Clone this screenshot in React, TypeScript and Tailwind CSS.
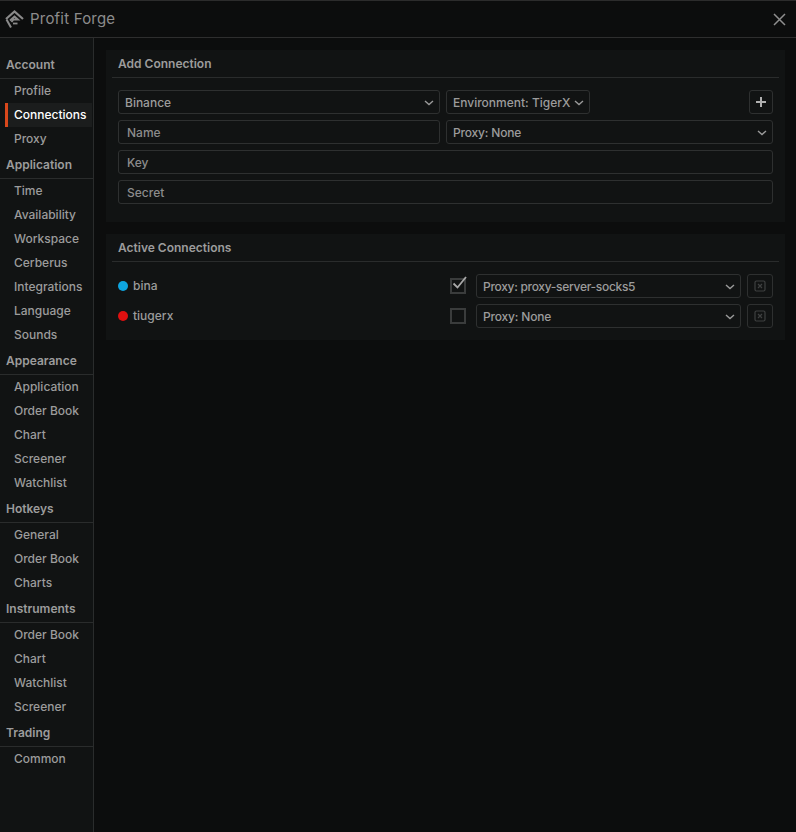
import React from "react";

const groups: [string, string[]][] = [
  ["Account", ["Profile", "Connections", "Proxy"]],
  ["Application", ["Time", "Availability", "Workspace", "Cerberus", "Integrations", "Language", "Sounds"]],
  ["Appearance", ["Application", "Order Book", "Chart", "Screener", "Watchlist"]],
  ["Hotkeys", ["General", "Order Book", "Charts"]],
  ["Instruments", ["Order Book", "Chart", "Watchlist", "Screener"]],
  ["Trading", ["Common"]],
];

const Chevron = () => (
  <svg width="10" height="6" viewBox="0 0 10 6" fill="none" className="shrink-0">
    <path d="M1 1l4 3.5L9 1" stroke="#9a9a9a" strokeWidth="1.4" />
  </svg>
);

function Select({ label, className }: { label: string; className: string }) {
  return (
    <div className={`h-6 flex items-center justify-between pl-[6px] pr-[5px] pt-px border border-[#2e3030] rounded-[3px] text-[#9c9c9c] ${className}`}>
      <span className="whitespace-nowrap">{label}</span>
      <Chevron />
    </div>
  );
}

function Field({ label, className }: { label: string; className: string }) {
  return (
    <div className={`h-6 flex items-center pl-2 pt-px border border-[#2e3030] rounded-[3px] text-[#8c8c8c] ${className}`}>{label}</div>
  );
}

function Panel({ title, className, children }: { title: string; className: string; children: React.ReactNode }) {
  return (
    <section className={`bg-[#111313] px-[6px] ${className}`}>
      <div className="h-[28px] flex items-center pl-[6px] pt-px border-b border-[#2a2c2c] text-[#9c9c9c] font-semibold">{title}</div>
      {children}
    </section>
  );
}

function ConnRow({ name, color, proxy, checked, track }: { name: string; color: string; proxy: string; checked: boolean; track: string }) {
  return (
    <div className="h-6 flex items-center pl-[6px] pr-[6px]">
      <span className="w-[10px] h-[10px] shrink-0 rounded-full" style={{ backgroundColor: color }} />
      <span className="ml-[5px] w-[317px] shrink-0 text-[#9c9c9c]">{name}</span>
      <div className="relative w-4 h-4 shrink-0 border-2 border-[#3a3c3c] mr-[10px]">
        {checked && (
          <svg width="17" height="15" viewBox="0 0 17 15" fill="none" className="absolute left-[-1px] top-[-5px]">
            <path d="M2.5 8.5l4 4L15 2" stroke="#a8a8a8" strokeWidth="1.8" />
          </svg>
        )}
      </div>
      <Select label={proxy} className={`w-[265px] shrink-0 mr-[6px] ${track}`} />
      <div className="w-[26px] h-6 shrink-0 flex items-center justify-center border border-[#2e3030] rounded-[3px]">
        <svg width="12" height="12" viewBox="0 0 12 12" fill="none">
          <rect x="1" y="1" width="10" height="10" rx="1.5" stroke="#3f4141" strokeWidth="1.2" />
          <path d="M4 4l4 4M8 4l-4 4" stroke="#3f4141" strokeWidth="1.2" />
        </svg>
      </div>
    </div>
  );
}

export default function App() {
  return (
    <div className="w-[796px] h-[832px] flex flex-col bg-[#0c0d0d] text-[12px] font-medium overflow-hidden font-['Inter',sans-serif]">
      <header className="h-[38px] shrink-0 flex items-center justify-between pl-[5px] pr-[10px] border-t border-b border-t-[#2c2c2c] border-b-[#2e2e2e]">
        <div className="flex items-center gap-[6px]">
          <svg width="19" height="19" viewBox="0 0 19 19" fill="none">
            <path d="M1 9L9.5 1.5L18 9" stroke="#8a8a8a" strokeWidth="2.2" />
            <path d="M1.5 9.5L6 17.5" stroke="#8a8a8a" strokeWidth="2" />
            <path d="M5 10.5L9.5 6.5L13 9.5H8.5L6.5 12" stroke="#8a8a8a" strokeWidth="1.8" />
            <path d="M8 13.5H12.5" stroke="#8a8a8a" strokeWidth="1.8" />
          </svg>
          <span className="text-[15px] font-normal tracking-[0.2px] text-[#8c8c8c]">Profit Forge</span>
        </div>
        <svg width="13" height="13" viewBox="0 0 13 13" fill="none">
          <path d="M1 1l11 11M12 1L1 12" stroke="#8f8f8f" strokeWidth="1.5" />
        </svg>
      </header>
      <div className="flex-1 flex min-h-0">
        <nav className="w-[94px] shrink-0 bg-[#111313] border-r border-[#2a2c2c] pt-[13px]">
          {groups.map(([head, items]) => (
            <div key={head}>
              <div className="h-[28px] flex items-center pl-[6px] pt-px border-b border-[#2a2c2c] text-[#9c9c9c] font-semibold">{head}</div>
              {items.map((it) => {
                const active = it === "Connections";
                return (
                  <div
                    key={it}
                    className={active
                      ? "h-6 ml-[5px] mr-px pl-[6px] flex items-center border-l-[3px] border-[#d9481c] bg-[#1b1d1d] text-white"
                      : "h-6 pl-[14px] flex items-center text-[#9c9c9c]"}
                  >
                    {it}
                  </div>
                );
              })}
            </div>
          ))}
        </nav>
        <main className="flex-1 pl-3 pr-[11px] pt-3 flex flex-col gap-3">
          <Panel title="Add Connection" className="h-[172px]">
            <div className="mt-3 px-[6px] flex flex-col gap-[6px]">
              <div className="flex gap-[6px]">
                <Select label="Binance" className="w-[322px]" />
                <Select label="Environment: TigerX" className="w-[144px]" />
                <div className="ml-auto w-6 h-6 flex items-center justify-center border border-[#2e3030] rounded-[3px]">
                  <svg width="12" height="12" viewBox="0 0 12 12" fill="none">
                    <path d="M6 1v10M1 6h10" stroke="#b0b0b0" strokeWidth="2" />
                  </svg>
                </div>
              </div>
              <div className="flex gap-[6px]">
                <Field label="Name" className="w-[322px]" />
                <Select label="Proxy: None" className="flex-1 tracking-[-0.18px]" />
              </div>
              <Field label="Key" className="w-full" />
              <Field label="Secret" className="w-full" />
            </div>
          </Panel>
          <Panel title="Active Connections" className="h-[106px]">
            <div className="mt-3 flex flex-col gap-[6px]">
              <ConnRow name="bina" color="#0ea5e0" proxy="Proxy: proxy-server-socks5" checked track="tracking-[-0.3px]" />
              <ConnRow name="tiugerx" color="#e01010" proxy="Proxy: None" checked={false} track="tracking-[-0.18px]" />
            </div>
          </Panel>
        </main>
      </div>
    </div>
  );
}
